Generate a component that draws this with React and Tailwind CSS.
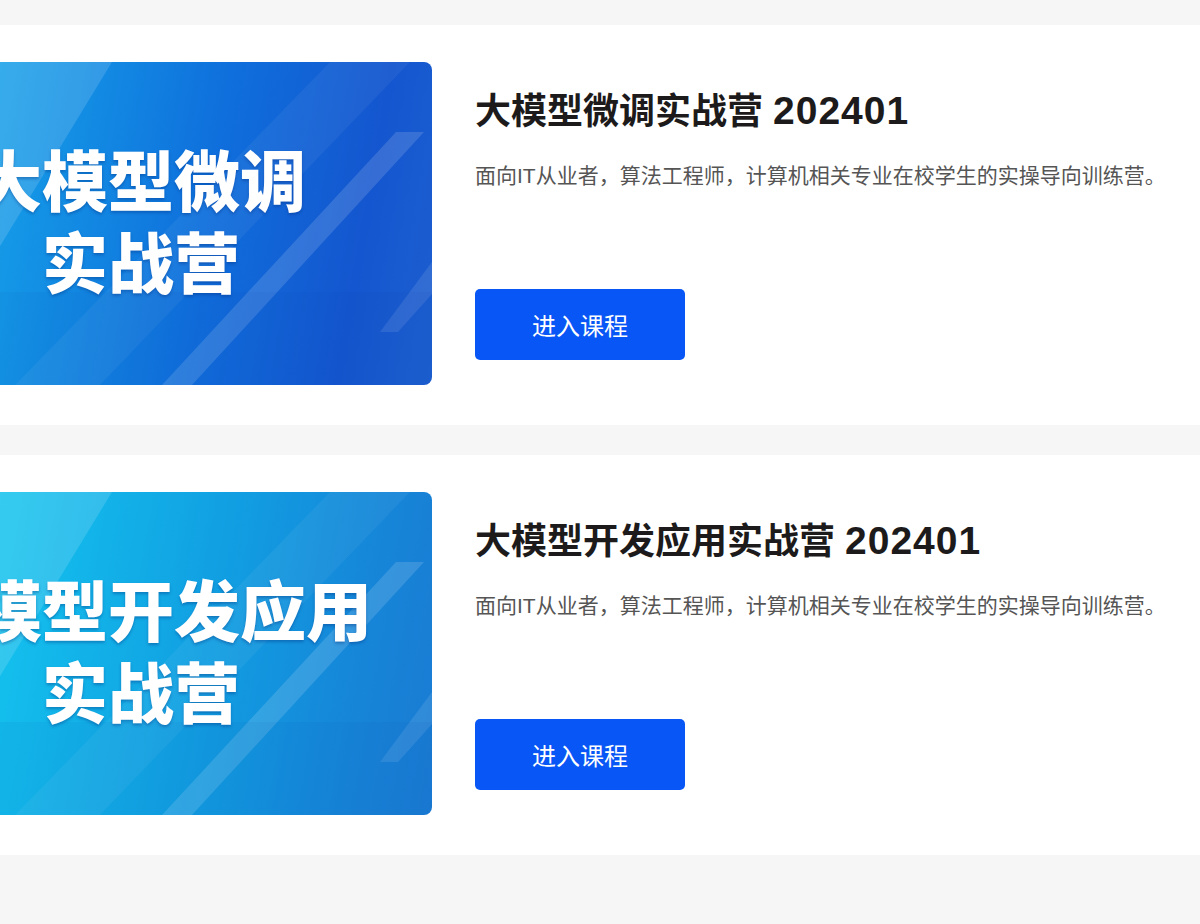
const courses = [
  {
    title: '大模型微调实战营',
    line1: '大模型微调',
    line2: '实战营',
    gradient: 'bg-[linear-gradient(100deg,#1bbcf2_0%,#1497e6_30%,#0f6fdc_60%,#1456cf_85%,#1d5fd0_100%)]',
  },
  {
    title: '大模型开发应用实战营',
    line1: '大模型开发应用',
    line2: '实战营',
    gradient: 'bg-[linear-gradient(100deg,#14d8f4_0%,#13bdec_30%,#119fe2_60%,#1685d8_85%,#1a7bd3_100%)]',
  },
]

function Banner({ line1, line2, gradient }) {
  return (
    <div className={`relative ml-[-150px] w-[582px] h-[323px] shrink-0 rounded-[8px] overflow-hidden ${gradient}`}>
      {/* light stripes of the cover picture */}
      <svg className="absolute inset-0" width="582" height="323" viewBox="0 0 582 323">
        <polygon points="0,0 262,0 110,250 0,250" fill="#ffffff" opacity="0.14" />
        <polygon points="480,0 560,0 250,323 165,323" fill="#ffffff" opacity="0.05" />
        <polygon points="546,70 574,70 342,323 312,323" fill="#ffffff" opacity="0.14" />
        <polygon points="582,200 582,232 548,270 530,270" fill="#ffffff" opacity="0.1" />
        <rect x="0" y="230" width="582" height="93" fill="#0a3fb0" opacity="0.06" />
      </svg>
      <div className="relative h-full flex flex-col items-center justify-center text-white font-black text-[66px] leading-[82px] whitespace-nowrap [text-shadow:0_2px_3px_rgba(0,40,120,0.35)]">
        <div>{line1}</div>
        <div>{line2}</div>
      </div>
    </div>
  )
}

export default function App() {
  return (
    <div className="min-h-screen bg-[#f6f6f6] pt-[25px] font-['Liberation_Sans','Noto_Sans_CJK_SC',sans-serif]">
      <div className="flex flex-col gap-[30px]">
        {courses.map(course => (
          <div key={course.title} className="flex bg-white pt-[37px] pb-[40px] overflow-hidden">
            <Banner line1={course.line1} line2={course.line2} gradient={course.gradient} />
            <div className="ml-[43px] pt-[27px] flex flex-col items-start">
              <h2 className="text-[36px] leading-[44px] font-bold text-[#1c1a1a] whitespace-nowrap">
                {course.title} <span className="text-[39px] tracking-[1px]">202401</span>
              </h2>
              <p className="mt-[27px] text-[21px] leading-[30px] text-[#555] whitespace-nowrap">
                面向IT从业者，算法工程师，计算机相关专业在校学生的实操导向训练营。
              </p>
              <button className="mt-[98px] w-[210px] h-[71px] pt-[4px] rounded-[5px] bg-[#0756f5] text-white text-[24px]">
                进入课程
              </button>
            </div>
          </div>
        ))}
      </div>
    </div>
  )
}
